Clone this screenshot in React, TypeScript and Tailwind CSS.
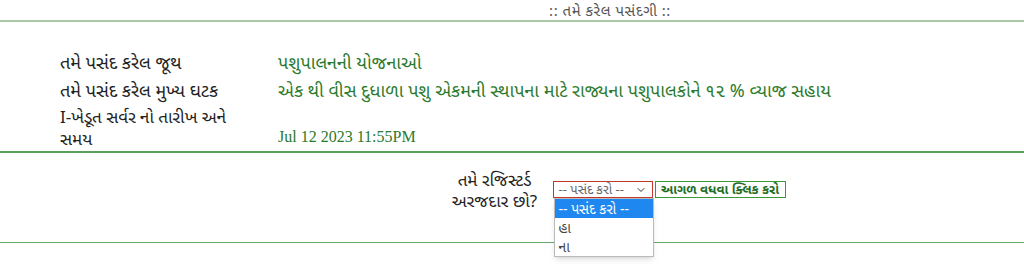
import { ChevronDown } from 'lucide-react'

const guj = "font-['Noto_Sans','Noto_Sans_Gujarati','Lato',sans-serif]"

/** Summary of the choices made, followed by the "registered applicant?" question. */
const rows = [
  { label: 'તમે પસંદ કરેલ જૂથ', value: 'પશુપાલનની યોજનાઓ' },
  {
    label: 'તમે પસંદ કરેલ મુખ્ય ઘટક',
    value: 'એક થી વીસ દુધાળા પશુ એકમની સ્થાપના માટે રાજ્યના પશુપાલકોને ૧૨ % વ્યાજ સહાય',
  },
]

export default function App() {
  return (
    <div className={`${guj} h-[270px] w-[1024px] overflow-hidden bg-white text-[#222]`}>
      <div className="whitespace-pre pl-[196px] text-center text-[15px] leading-[20px] tracking-[0.5px] text-[#555]">
        {':: તમે કરેલ પસંદગી ::'}
      </div>
      <div className="h-[2px] bg-[#a9c9a4]" />

      <div className="px-[60px] pt-[26px]">
        {rows.map((r) => (
          <div key={r.label} className="flex h-[28px] items-center">
            <div className="w-[218px] shrink-0 text-[18px]">{r.label}</div>
            <div className="text-[18px] text-[#2c7a2c]">{r.value}</div>
          </div>
        ))}
        <div className="flex items-end pt-[2px] leading-[22px]">
          <div className="w-[218px] shrink-0 text-[17px]">
            I-ખેડૂત સર્વર નો તારીખ અને
            <br />
            સમય
          </div>
          <div className="pb-[2px] font-['Liberation_Serif',serif] text-[16px] text-[#2c7a2c]">
            Jul 12 2023 11:55PM
          </div>
        </div>
      </div>
      <div className="mt-[1px] h-[2px] bg-[#5aa05a]" />

      <div className="flex h-[89px] justify-center pl-[206px] pt-[16px]">
        <div className="w-[100px] text-center text-[17px] leading-[21px]">
          તમે રજિસ્ટર્ડ અરજદાર છો?
        </div>
        <div className="relative ml-[8px] mt-[12px] flex h-[17px]">
          <div className="flex w-[100px] items-center justify-between border border-[#c0392b] px-[5px] text-[13px] text-[#666]">
            <span>-- પસંદ કરો --</span>
            <ChevronDown className="size-[12px] text-[#333]" strokeWidth={2} />
          </div>
          <div className="ml-[2px] flex w-[131px] items-center justify-center border border-[#3a9a3a] text-[13px] font-bold text-[#1f6e1f]">
            આગળ વધવા ક્લિક કરો
          </div>
          <div className="absolute left-[1px] top-[17px] w-[100px] border border-[#bbb] bg-white text-[14px] leading-[19px] shadow-md">
            <div className="bg-[#1e88f0] px-[4px] text-white">-- પસંદ કરો --</div>
            <div className="px-[4px] text-[#444]">હા</div>
            <div className="px-[4px] text-[#444]">ના</div>
          </div>
        </div>
      </div>
      <div className="h-[1px] bg-[#6aa86a]" />
    </div>
  )
}
